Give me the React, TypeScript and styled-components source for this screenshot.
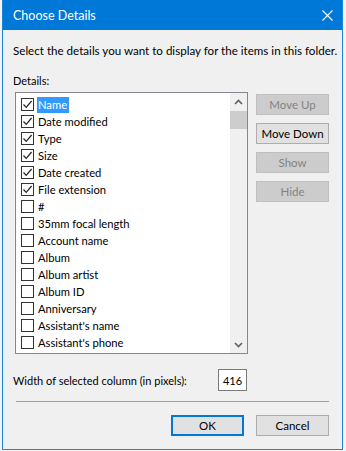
import React from 'react';
import styled, { createGlobalStyle } from 'styled-components';

const GlobalStyle = createGlobalStyle`
  html, body { margin: 0; padding: 0; background: #f4f4f4; }
  body { font-family: Lato, "Noto Sans", "Liberation Sans", sans-serif; font-size: 11px; color: #000; }
`;

const Frame = styled.div`
  width: 346px;
  height: 451px;
  padding: 0 3px 1px 2px;
  box-sizing: border-box;
`;

const Window = styled.div`
  height: 100%;
  border: 1px solid #1883d7;
  border-top: none;
  background: #f0f0f0;
  display: flex;
  flex-direction: column;
  box-sizing: border-box;
`;

const TitleBar = styled.div`
  height: 30px;
  background: #0078d7;
  color: #fff;
  display: flex;
  align-items: center;
  justify-content: space-between;
  padding: 0 9px 0 10px;
  font-size: 12.5px;
`;

const Body = styled.div`
  flex: 1;
  display: flex;
  flex-direction: column;
  padding: 13px 13px 0 10px;
`;

const Prompt = styled.div`
  height: 16px;
  line-height: 16px;
  white-space: nowrap;
  font-size: 11.6px;
`;

const Label = styled.div`
  margin-top: 14px;
  height: 16px;
  line-height: 16px;
`;

const Middle = styled.div`
  display: flex;
  gap: 8px;
  margin-top: 3px;
`;

const ListBox = styled.div`
  width: 234px;
  height: 262px;
  border: 1px solid #828790;
  background: #fff;
  box-sizing: border-box;
  display: flex;
  margin-left: 2px;
  overflow: hidden;
`;

const Items = styled.div`
  flex: 1;
  padding: 3px 0 0 5px;
  overflow: hidden;
`;

const Row = styled.div`
  height: 17px;
  display: flex;
  align-items: center;
  gap: 3px;
`;

const Box = styled.span`
  width: 13px;
  height: 13px;
  border: 1px solid #333;
  box-sizing: border-box;
  background: #fff;
  display: flex;
  align-items: center;
  justify-content: center;
  flex: none;
`;

const ItemText = styled.span<{ $sel?: boolean }>`
  padding: 0 2px 0 1px;
  line-height: 16px;
  white-space: nowrap;
  font-size: 11.2px;
  background: ${(p) => (p.$sel ? '#3399ff' : 'transparent')};
  color: ${(p) => (p.$sel ? '#fff' : '#000')};
`;

const ScrollBar = styled.div`
  width: 17px;
  background: #f0f0f0;
  display: flex;
  flex-direction: column;
  align-items: center;
`;

const Arrow = styled.div`
  height: 17px;
  width: 17px;
  display: flex;
  align-items: center;
  justify-content: center;
`;

const Thumb = styled.div`
  width: 17px;
  height: 18px;
  background: #cdcdcd;
  margin-top: 1px;
`;

const Track = styled.div`
  flex: 1;
`;

const Side = styled.div`
  display: flex;
  flex-direction: column;
  gap: 8px;
  padding-top: 2px;
`;

const Btn = styled.div<{ $disabled?: boolean; $default?: boolean }>`
  width: 73px;
  height: 21px;
  box-sizing: border-box;
  display: flex;
  align-items: center;
  justify-content: center;
  border: ${(p) => (p.$default ? '2px solid #0078d7' : p.$disabled ? '1px solid #bfbfbf' : '1px solid #adadad')};
  background: ${(p) => (p.$disabled ? '#cccccc' : '#e1e1e1')};
  color: ${(p) => (p.$disabled ? '#838383' : '#000')};
  font-size: 11.5px;
`;

const WidthRow = styled.div`
  display: flex;
  align-items: center;
  justify-content: space-between;
  margin-top: 15px;
  width: 234px;
`;

const NumBox = styled.div`
  width: 29px;
  height: 22px;
  border: 1px solid #7a7a7a;
  background: #fff;
  box-sizing: border-box;
  display: flex;
  align-items: center;
  justify-content: center;
`;

const Separator = styled.div`
  height: 1px;
  background: #a0a0a0;
  margin: 10px 0 0 3px;
`;

const Footer = styled.div`
  display: flex;
  justify-content: flex-end;
  gap: 12px;
  margin-top: 13px;
`;

const items: [string, boolean][] = [
  ['Name', true],
  ['Date modified', true],
  ['Type', true],
  ['Size', true],
  ['Date created', true],
  ['File extension', true],
  ['#', false],
  ['35mm focal length', false],
  ['Account name', false],
  ['Album', false],
  ['Album artist', false],
  ['Album ID', false],
  ['Anniversary', false],
  ["Assistant's name", false],
  ["Assistant's phone", false],
  ['Attachments', false],
];

const Check = () => (
  <svg width="11" height="11" viewBox="0 0 11 11">
    <path d="M1.5 5.5 L4.2 8.3 L9.6 2" fill="none" stroke="#222" strokeWidth="1.2" />
  </svg>
);

export default function App() {
  return (
    <Frame>
      <GlobalStyle />
      <Window>
        <TitleBar>
          <span>Choose Details</span>
          <svg width="11" height="11" viewBox="0 0 11 11">
            <path d="M0.5 0.5 L10.5 10.5 M10.5 0.5 L0.5 10.5" stroke="#fff" strokeWidth="1.1" />
          </svg>
        </TitleBar>
        <Body>
          <Prompt>Select the details you want to display for the items in this folder.</Prompt>
          <Label>Details:</Label>
          <Middle>
            <ListBox>
              <Items>
                {items.map(([name, on], i) => (
                  <Row key={name}>
                    <Box>{on && <Check />}</Box>
                    <ItemText $sel={i === 0}>{name}</ItemText>
                  </Row>
                ))}
              </Items>
              <ScrollBar>
                <Arrow>
                  <svg width="9" height="6" viewBox="0 0 9 6">
                    <path d="M1 5 L4.5 1.5 L8 5" fill="none" stroke="#606060" strokeWidth="1.6" />
                  </svg>
                </Arrow>
                <Thumb />
                <Track />
                <Arrow>
                  <svg width="9" height="6" viewBox="0 0 9 6">
                    <path d="M1 1 L4.5 4.5 L8 1" fill="none" stroke="#606060" strokeWidth="1.6" />
                  </svg>
                </Arrow>
              </ScrollBar>
            </ListBox>
            <Side>
              <Btn $disabled>Move Up</Btn>
              <Btn>Move Down</Btn>
              <Btn $disabled>Show</Btn>
              <Btn $disabled>Hide</Btn>
            </Side>
          </Middle>
          <WidthRow>
            <span>Width of selected column (in pixels):</span>
            <NumBox>416</NumBox>
          </WidthRow>
          <Separator />
          <Footer>
            <Btn $default>OK</Btn>
            <Btn>Cancel</Btn>
          </Footer>
        </Body>
      </Window>
    </Frame>
  );
}
